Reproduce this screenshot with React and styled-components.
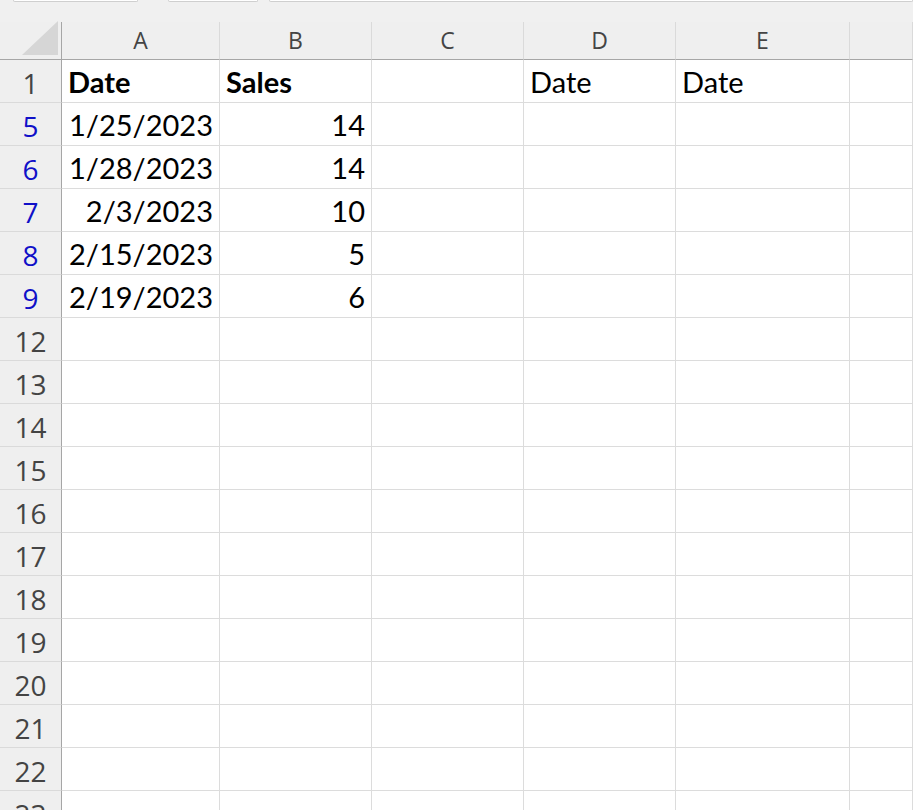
import React from 'react';
import styled, { createGlobalStyle } from 'styled-components';

const GlobalStyle = createGlobalStyle`
  html, body {
    margin: 0;
    padding: 0;
    background: #ffffff;
    overflow: hidden;
  }
`;

const Page = styled.div`
  width: 913px;
  height: 810px;
  overflow: hidden;
  background: #ffffff;
`;

const TopStrip = styled.div`
  height: 22px;
  background: #f0f0f0;
  display: flex;
`;

const TabStub = styled.div`
  box-sizing: border-box;
  width: ${(p) => (p.$w ? `${p.$w}px` : 'auto')};
  flex: ${(p) => (p.$w ? 'none' : '1')};
  margin-left: ${(p) => p.$left}px;
  height: 2px;
  background: #ffffff;
  border: 1px solid #cfcfcf;
  border-top: none;
  border-radius: 0 0 4px 4px;
`;

const Grid = styled.div`
  display: grid;
  grid-template-columns: 62px 158px 152px 152px 152px 174px 1fr;
  grid-template-rows: 38px;
  grid-auto-rows: 43px;
`;

const Corner = styled.div`
  background: #efefef;
  border-right: 1px solid #a6a6a6;
  border-bottom: 1px solid #a6a6a6;
  box-sizing: border-box;
  display: flex;
  align-items: flex-end;
  justify-content: flex-end;
  padding: 0 3px 4px 0;
`;

const ColHead = styled.div`
  background: #efefef;
  border-right: 1px solid #dadada;
  border-bottom: 1px solid #a6a6a6;
  box-sizing: border-box;
  display: flex;
  align-items: center;
  justify-content: center;
  font-family: 'Open Sans', 'Noto Sans', sans-serif;
  font-size: 23px;
  color: #444444;
  padding-bottom: 1px;
`;

const RowHead = styled.div`
  background: #efefef;
  border-right: 1px solid #a6a6a6;
  border-bottom: 1px solid #dadada;
  box-sizing: border-box;
  display: flex;
  align-items: center;
  justify-content: center;
  font-family: 'Open Sans', 'Noto Sans', sans-serif;
  font-size: 28px;
  color: ${(p) => (p.$filtered ? '#1010c8' : '#444444')};
  padding-top: 3px;
`;

const Cell = styled.div`
  border-right: 1px solid #dcdcdc;
  border-bottom: 1px solid #dcdcdc;
  box-sizing: border-box;
  display: flex;
  align-items: center;
  justify-content: ${(p) => (p.$right ? 'flex-end' : 'flex-start')};
  padding: 0 6px;
  font-family: Lato, 'Open Sans', sans-serif;
  font-size: 29px;
  font-weight: ${(p) => (p.$bold ? 700 : 400)};
  color: #000000;
  white-space: nowrap;
`;

const cols = ['A', 'B', 'C', 'D', 'E', ''];

const rows = [
  { n: 1, cells: [{ t: 'Date', bold: true }, { t: 'Sales', bold: true }, {}, { t: 'Date' }, { t: 'Date' }, {}] },
  { n: 5, f: true, cells: [{ t: '1/25/2023', r: true }, { t: '14', r: true }, {}, {}, {}, {}] },
  { n: 6, f: true, cells: [{ t: '1/28/2023', r: true }, { t: '14', r: true }, {}, {}, {}, {}] },
  { n: 7, f: true, cells: [{ t: '2/3/2023', r: true }, { t: '10', r: true }, {}, {}, {}, {}] },
  { n: 8, f: true, cells: [{ t: '2/15/2023', r: true }, { t: '5', r: true }, {}, {}, {}, {}] },
  { n: 9, f: true, cells: [{ t: '2/19/2023', r: true }, { t: '6', r: true }, {}, {}, {}, {}] },
];

for (let n = 12; n <= 23; n++) {
  rows.push({ n, cells: [{}, {}, {}, {}, {}, {}] });
}

const App = () => {
  return (
    <Page>
      <GlobalStyle />
      <TopStrip>
        <TabStub $left={13} $w={125} />
        <TabStub $left={30} $w={90} />
        <TabStub $left={11} />
      </TopStrip>
      <Grid>
        <Corner>
          <svg width="36" height="34" viewBox="0 0 36 34">
            <polygon points="36,0 36,34 0,34" fill="#d6d6d6" />
          </svg>
        </Corner>
        {cols.map((c, i) => (
          <ColHead key={i}>{c}</ColHead>
        ))}
        {rows.map((row) => (
          <React.Fragment key={row.n}>
            <RowHead $filtered={row.f}>{row.n}</RowHead>
            {row.cells.map((cell, i) => (
              <Cell key={i} $bold={cell.bold} $right={cell.r}>
                {cell.t}
              </Cell>
            ))}
          </React.Fragment>
        ))}
      </Grid>
    </Page>
  );
};

export default App;
